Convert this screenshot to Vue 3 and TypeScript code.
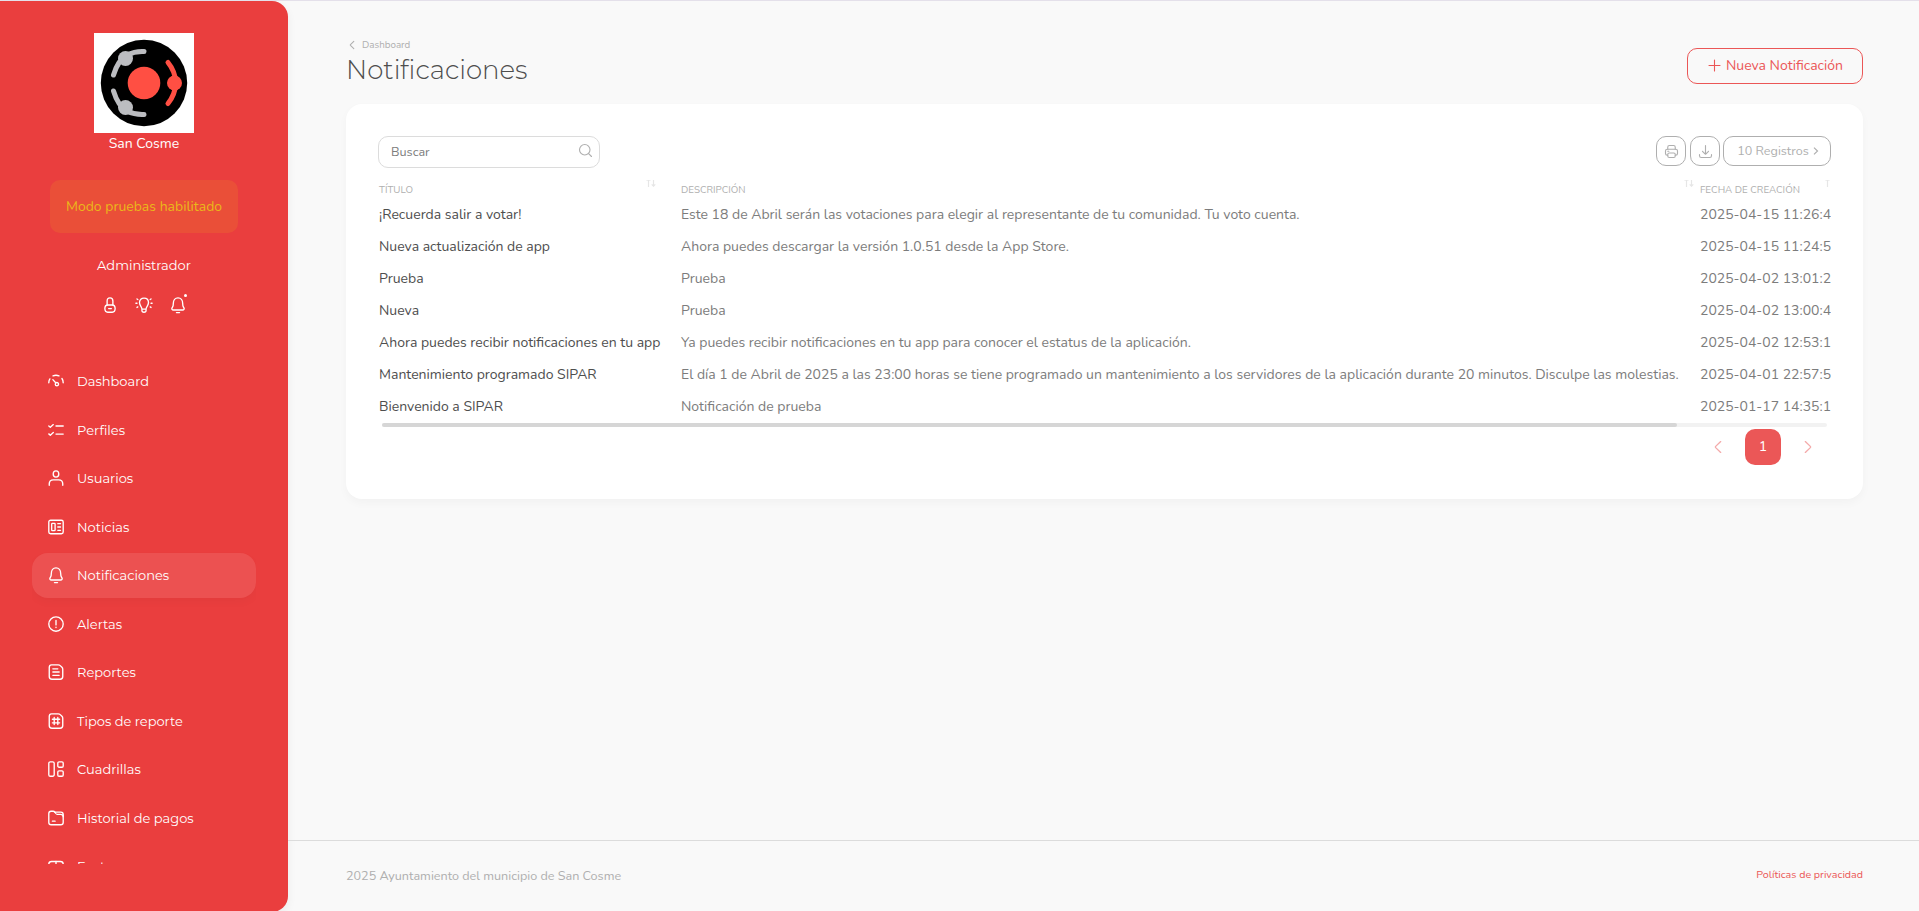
<script setup lang="ts">
interface NavItem {
  label: string
  icon: string[]
  active?: boolean
}

interface Row {
  title: string
  description: string
  date: string
}

const bell = [
  'M4.8 8.2C4.8 4.800 6.900 2 10 2s5.200 2.800 5.200 6.200c0 2.100.3 3.200.9 4.200l.5.800c.7 1.200-.1 2.400-1.400 2.400H4.800c-1.300 0-2.100-1.200-1.400-2.400l.5-.8c.6-1 .9-2.100.9-4.200Z',
  'M8.300 18.400h3.400',
]

const navItems: NavItem[] = [
  {
    label: 'Dashboard',
    icon: [
      'M2 12c0-1.700.400-3.100 1.200-4.300M6.700 4.300a8.300 8.300 0 0 1 6.600 0M16.600 7.200c1 1.300 1.400 2.900 1.400 4.800',
      'M6.500 8.500l3.400 3.800M11 13.500m-1.800 0a1.800 1.800 0 1 0 3.600 0a1.800 1.800 0 1 0-3.600 0',
    ],
  },
  {
    label: 'Perfiles',
    icon: ['M2 5.600l1.700 1.400L7 4M2 14.300l1.700 1.500L7 12.700', 'M10 5.500h8M10 14.500h8'],
  },
  {
    label: 'Usuarios',
    icon: [
      'M10 2c2.200 0 3.100.900 3.100 3.500S12.200 9 10 9s-3.100-.900-3.100-3.500S7.800 2 10 2Z',
      'M2.500 18v-1.500c0-2.800 1.800-4.500 4.500-4.500h6c2.700 0 4.500 1.700 4.500 4.500V18',
    ],
  },
  {
    label: 'Noticias',
    icon: [
      'M4 2.500h12a2 2 0 0 1 2 2v11a2 2 0 0 1-2 2H4a2 2 0 0 1-2-2v-11a2 2 0 0 1 2-2Z',
      'M6 6h2.200a.8.8 0 0 1 .8.8v6.400a.8.8 0 0 1-.8.8H6a.8.8 0 0 1-.8-.8V6.800A.8.8 0 0 1 6 6ZM12 6.300h3M12 10h3M12 13.700h3',
    ],
  },
  { label: 'Notificaciones', icon: bell, active: true },
  {
    label: 'Alertas',
    icon: ['M10 2a8 8 0 1 0 0 16a8 8 0 1 0 0-16Z', 'M10 6v5M10 13.500v.5'],
  },
  {
    label: 'Reportes',
    icon: [
      'M5 2h7.500c1 0 1.500.200 2.200.900l1.900 1.900c.700.700.900 1.200.900 2.200V15c0 2-1 3-3 3H5.500c-2 0-3-1-3-3V5c0-2 .9-3 2.500-3Z',
      'M6.500 6.500h5.500M6.500 10h7M6.500 13.700h7',
    ],
  },
  {
    label: 'Tipos de reporte',
    icon: [
      'M5 2h7.500c1 0 1.500.200 2.200.900l1.900 1.900c.700.700.900 1.200.900 2.200V15c0 2-1 3-3 3H5.500c-2 0-3-1-3-3V5c0-2 .9-3 2.500-3Z',
      'M8 6v8M12 6v8M6 8h8M6 12h8',
    ],
  },
  {
    label: 'Cuadrillas',
    icon: [
      'M3.700 2h2.600A1.700 1.700 0 0 1 8 3.700v12.600A1.700 1.700 0 0 1 6.300 18H3.700A1.700 1.700 0 0 1 2 16.300V3.700A1.700 1.700 0 0 1 3.700 2Z',
      'M13.400 2h3.200A1.400 1.400 0 0 1 18 3.400v3.200A1.400 1.400 0 0 1 16.600 8h-3.200A1.400 1.400 0 0 1 12 6.600V3.400A1.400 1.400 0 0 1 13.400 2ZM13.400 12h3.200a1.400 1.400 0 0 1 1.400 1.400v3.200a1.400 1.400 0 0 1-1.400 1.400h-3.200a1.400 1.400 0 0 1-1.400-1.400v-3.200a1.400 1.400 0 0 1 1.400-1.400Z',
    ],
  },
  {
    label: 'Historial de pagos',
    icon: [
      'M4.500 2.500h2.200c1.200 0 1.700.400 2.300 1.200l.8 1.300c.400.600.800.900 1.500.900h3.700c2 0 3 .8 3 2.500v6.600c0 1.700-1 2.500-2.700 2.500H4.700C3 17.500 2 16.700 2 15V5c0-1.500 1-2.500 2.500-2.500Z',
      'M8.500 3.500h7c1.500 0 2.500.9 2.500 2.500v2.500M6 13.500h3',
    ],
  },
  {
    label: 'Facturas',
    icon: ['M5 5h10a3 3 0 0 1 3 3v7a3 3 0 0 1-3 3H5a3 3 0 0 1-3-3V8a3 3 0 0 1 3-3Z', 'M10 5v3'],
  },
]

const rows: Row[] = [
  {
    title: '¡Recuerda salir a votar!',
    description: 'Este 18 de Abril serán las votaciones para elegir al representante de tu comunidad. Tu voto cuenta.',
    date: '2025-04-15 11:26:4',
  },
  {
    title: 'Nueva actualización de app',
    description: 'Ahora puedes descargar la versión 1.0.51 desde la App Store.',
    date: '2025-04-15 11:24:5',
  },
  { title: 'Prueba', description: 'Prueba', date: '2025-04-02 13:01:2' },
  { title: 'Nueva', description: 'Prueba', date: '2025-04-02 13:00:4' },
  {
    title: 'Ahora puedes recibir notificaciones en tu app',
    description: 'Ya puedes recibir notificaciones en tu app para conocer el estatus de la aplicación.',
    date: '2025-04-02 12:53:1',
  },
  {
    title: 'Mantenimiento programado SIPAR',
    description:
      'El día 1 de Abril de 2025 a las 23:00 horas se tiene programado un mantenimiento a los servidores de la aplicación durante 20 minutos. Disculpe las molestias.',
    date: '2025-04-01 22:57:5',
  },
  { title: 'Bienvenido a SIPAR', description: 'Notificación de prueba', date: '2025-01-17 14:35:1' },
]
</script>

<template>
  <div class="app">
    <aside class="sidebar">
      <svg class="logo" viewBox="0 0 100 100">
        <rect width="100" height="100" fill="#fff" />
        <circle cx="50" cy="50" r="43.200" fill="#000" />
        <circle cx="50" cy="50" r="16.300" fill="#ff4f43" />
        <g fill="none" stroke="#bcbdc1" stroke-width="5" stroke-linecap="round">
          <path d="M19.500 42Q24 27 33 22Q41 18 50 18.500" />
          <path d="M19.500 58Q24 73 33 78Q41 82 50 81.500" />
        </g>
        <circle cx="31.500" cy="25.500" r="7.500" fill="#bcbdc1" />
        <circle cx="31.500" cy="74.500" r="7.500" fill="#bcbdc1" />
        <path d="M74 29.500Q81 38 82 50Q81 62 74 70.500" fill="none" stroke="#ff4f43" stroke-width="5" stroke-linecap="round" />
        <circle cx="80.500" cy="50" r="7.500" fill="#ff4f43" />
      </svg>
      <div class="org">San Cosme</div>
      <div class="mode">Modo pruebas habilitado</div>
      <div class="user">Administrador</div>
      <div class="tools">
        <svg class="icon" viewBox="0 0 20 20">
          <path d="M6.800 10V5.500C6.800 3.200 7.900 2 10 2s3.200 1.200 3.200 3.500V10" />
          <path d="M7.500 10h5c2.200 0 3.200 1.200 3.200 4S14.700 18 12.500 18h-5c-2.200 0-3.200-1.200-3.200-4S5.300 10 7.500 10ZM8.500 14h3" />
        </svg>
        <svg class="icon" viewBox="0 0 20 20">
          <path d="M7.700 14.500C7.700 12 5 10.700 5 7.300C5 4.200 7.200 2.300 10 2.300s5 1.900 5 5c0 3.400-2.700 4.700-2.700 7.200v1.700c0 1.200-.8 1.800-2.300 1.800s-2.300-.6-2.300-1.800ZM7.700 14.500h4.600" />
          <path d="M1 8h1.200M17.800 8H19M2.200 3.300l.9.600M17.800 3.300l-.9.600M2.200 12.700l.9-.6M17.800 12.700l-.9-.6" />
        </svg>
        <span class="bell">
          <svg class="icon" viewBox="0 0 20 20"><path v-for="d in bell" :key="d" :d="d" /></svg>
          <i class="dot"></i>
        </span>
      </div>
      <nav class="nav">
        <a v-for="item in navItems" :key="item.label" class="nav-item" :class="{ active: item.active }">
          <svg class="icon" viewBox="0 0 20 20"><path v-for="d in item.icon" :key="d" :d="d" /></svg>
          <span>{{ item.label }}</span>
        </a>
      </nav>
    </aside>

    <div class="page">
      <main class="content">
        <header class="head">
          <div>
            <div class="crumb">
              <svg class="icon crumb-icon" viewBox="0 0 20 20"><path d="M13 16L7.400 10.700a1 1 0 0 1 0-1.400L13 4" /></svg>
              <span>Dashboard</span>
            </div>
            <h1>Notificaciones</h1>
          </div>
          <button class="new-btn">
            <svg class="icon plus" viewBox="0 0 15 15"><path d="M7.500 13V2M2 7.500h11" /></svg>
            <span>Nueva Notificación</span>
          </button>
        </header>

        <section class="card">
          <div class="toolbar">
            <div class="search">
              <span>Buscar</span>
              <svg class="icon search-icon" viewBox="0 0 20 20">
                <path d="M9 2a7 7 0 1 0 0 14a7 7 0 1 0 0-14ZM14.200 14.200L18 18" />
              </svg>
            </div>
            <div class="actions">
              <button class="tool-btn">
                <svg class="icon tool-icon" viewBox="0 0 20 20">
                  <path d="M5 7V4.200C5 2.800 5.800 2 7.200 2h5.600C14.200 2 15 2.800 15 4.200V7" />
                  <path d="M5 15H4.300C2.800 15 2 14.200 2 12.700V9.300C2 7.800 2.800 7 4.300 7h11.400C17.200 7 18 7.800 18 9.300v3.400c0 1.500-.8 2.300-2.300 2.300H15" />
                  <path d="M7 12h6c1.300 0 2 .7 2 2v2c0 1.300-.7 2-2 2H7c-1.300 0-2-.7-2-2v-2c0-1.300.7-2 2-2ZM5 9.600h1.500" />
                </svg>
              </button>
              <button class="tool-btn">
                <svg class="icon tool-icon" viewBox="0 0 20 20">
                  <path d="M2 14v1.500C2 17.200 2.800 18 4.500 18h11c1.700 0 2.500-.8 2.500-2.500V14M10 2v11.500M14 9.700l-3.300 3.400a1 1 0 0 1-1.400 0L6 9.700" />
                </svg>
              </button>
              <button class="length-btn">
                <span>10 Registros</span>
                <svg class="length-icon" viewBox="0 0 6 8"><path d="M1 .6L4.500 4L1 7.400" /></svg>
              </button>
            </div>
          </div>

          <div class="table">
            <div class="row header">
              <div class="cell">
                TÍTULO
                <svg class="sort" viewBox="0 0 10 9"><path d="M2.500 9V.8M.7 2.600L2.500.8l1.800 1.800M7.500 0v8.200M5.700 6.400l1.800 1.800l1.800-1.800" /></svg>
              </div>
              <div class="cell">
                DESCRIPCIÓN
                <svg class="sort" viewBox="0 0 10 9"><path d="M2.500 9V.8M.7 2.600L2.500.8l1.800 1.800M7.500 0v8.200M5.700 6.400l1.800 1.800l1.800-1.800" /></svg>
              </div>
              <div class="cell">
                FECHA DE CREACIÓN
                <svg class="sort single" viewBox="0 0 5 9"><path d="M2.500 9V.8M.7 2.600L2.500.8l1.800 1.800" /></svg>
              </div>
            </div>
            <div v-for="row in rows" :key="row.date" class="row">
              <div class="cell title">{{ row.title }}</div>
              <div class="cell">{{ row.description }}</div>
              <div class="cell">{{ row.date }}</div>
            </div>
          </div>
          <div class="track"><div class="thumb"></div></div>

          <div class="pager">
            <span class="page-link faded">
              <svg class="icon page-icon" viewBox="0 0 20 20"><path d="M13 16L7.400 10.700a1 1 0 0 1 0-1.400L13 4" /></svg>
            </span>
            <span class="page-link current">1</span>
            <span class="page-link faded">
              <svg class="icon page-icon" viewBox="0 0 20 20"><path d="M7 4l5.600 5.300a1 1 0 0 1 0 1.400L7 16" /></svg>
            </span>
          </div>
        </section>
      </main>

      <footer class="footer">
        <span>2025 Ayuntamiento del municipio de San Cosme</span>
        <a class="privacy">Políticas de privacidad</a>
      </footer>
    </div>
  </div>
</template>

<style>
body {
  margin: 0;
  background: #f9f9f9;
}
</style>

<style scoped>
* {
  box-sizing: border-box;
}

.app {
  display: flex;
  height: 911px;
  overflow: hidden;
  border-top: 1px solid #e4e0ea;
  background: #f9f9f9;
  color: #7c7c7c;
  font: 14px/20px Nunito, "Noto Sans", sans-serif;
}

button {
  padding: 0;
  background: none;
  font: inherit;
  color: inherit;
}

.icon {
  display: block;
  flex: none;
  width: 18px;
  height: 18px;
  fill: none;
  stroke: currentColor;
  stroke-width: 1.5;
  stroke-linecap: round;
  stroke-linejoin: round;
}

/* Sidebar */
.sidebar {
  display: flex;
  flex-direction: column;
  align-items: center;
  flex: none;
  width: 288px;
  height: 911px;
  padding: 32px;
  border-radius: 0 16px 16px 0;
  background: #ea3e3e;
  color: #fff;
  box-shadow: 0 4px 10px rgba(0, 0, 0, 0.06);
  font-family: Montserrat, "Noto Sans", sans-serif;
  font-size: 13px;
}

.logo {
  display: block;
  flex: none;
  width: 100px;
  height: 100px;
}

.org {
  margin-top: 1px;
  font: 14px/20px Nunito, "Noto Sans", sans-serif;
}

.mode {
  height: 53px;
  margin-top: 26px;
  padding: 0 16px;
  border-radius: 10px;
  background: rgba(235, 183, 26, 0.15);
  color: #ebb71a;
  font: 14px/53px Nunito, "Noto Sans", sans-serif;
}

.user {
  margin-top: 22px;
}

.tools {
  display: flex;
  gap: 16px;
  margin-top: 21px;
}

.bell {
  position: relative;
}

.dot {
  position: absolute;
  top: -2px;
  right: 0;
  width: 3px;
  height: 3px;
  border-radius: 50%;
  background: #fff;
}

.nav {
  display: flex;
  flex-direction: column;
  gap: 4px;
  align-self: stretch;
  height: 505px;
  margin-top: 45px;
  overflow: hidden;
}

.nav-item {
  display: flex;
  flex: none;
  align-items: center;
  gap: 12px;
  height: 44.5px;
  padding: 0 15px;
  border-radius: 16px;
}

.nav-item.active {
  background: rgba(255, 255, 255, 0.1);
  box-shadow: 0 4px 10px rgba(0, 0, 0, 0.03);
}

/* Page */
.page {
  display: flex;
  flex: 1;
  flex-direction: column;
  height: 910px;
}

.content {
  flex: 1;
  padding: 35px 57px 0 58px;
}

.head {
  display: flex;
  justify-content: space-between;
  height: 68px;
}

.crumb {
  display: flex;
  align-items: center;
  gap: 4px;
  height: 18px;
  color: #afafaf;
  font-size: 9.8px;
}

.crumb-icon {
  width: 12px;
  height: 12px;
  stroke-width: 1.8;
}

h1 {
  margin: 1px 0 0;
  color: #4e4e4e;
  font: 300 26px/30px Montserrat, "Noto Sans", sans-serif;
}

.new-btn {
  display: flex;
  align-items: center;
  justify-content: center;
  gap: 4px;
  width: 176px;
  height: 36px;
  margin-top: 12px;
  border: 1px solid #eb5757;
  border-radius: 10px;
  color: #eb5757;
}

.plus {
  width: 15px;
  height: 15px;
  margin-bottom: 1px;
  stroke-width: 1.1;
}

.card {
  height: 395px;
  padding: 32px;
  border-radius: 16px;
  background: #fff;
  box-shadow: 0 4px 10px rgba(0, 0, 0, 0.03);
}

.toolbar {
  display: flex;
  justify-content: space-between;
  height: 44px;
}

.search {
  display: flex;
  align-items: center;
  justify-content: space-between;
  width: 222px;
  height: 32px;
  padding: 0 6px 0 12px;
  border: 1px solid #dcdcdc;
  border-radius: 10px;
  font-size: 12.6px;
}

.search-icon {
  width: 15px;
  height: 15px;
  margin-bottom: 3px;
  color: #afafaf;
}

.actions {
  display: flex;
  gap: 4px;
  color: #afafaf;
}

.tool-btn,
.length-btn {
  display: flex;
  align-items: center;
  justify-content: center;
  width: 30px;
  height: 30px;
  border: 1px solid #afafaf;
  border-radius: 10px;
}

.tool-icon {
  width: 15px;
  height: 15px;
}

.length-btn {
  gap: 4px;
  width: 108px;
  margin-left: -1px;
  padding-left: 2px;
  font-size: 12.6px;
}

.length-icon {
  width: 6px;
  height: 8px;
  fill: none;
  stroke: currentColor;
  stroke-width: 1.2;
}

.table {
  overflow: hidden;
}

.row {
  display: grid;
  grid-template-columns: 302px 1019px 131px;
  height: 32px;
  padding-left: 1px;
  line-height: 32px;
  white-space: nowrap;
}

.row.header {
  height: 18px;
  margin: -2px 0 3px;
  color: #afafaf;
  font-size: 9.8px;
  line-height: 24px;
}

.cell {
  position: relative;
}

.title {
  color: #4e4e4e;
}

.sort {
  position: absolute;
  top: 0;
  right: 25px;
  width: 10px;
  height: 9px;
  fill: none;
  stroke: #e6e6e6;
  stroke-width: 1.2;
}

.cell:nth-child(2) .sort {
  right: 6px;
}

.sort.single {
  right: 1px;
  width: 5px;
}

.track {
  height: 4px;
  margin: 0 4px;
  border-radius: 2px;
  background: #f2f2f2;
}

.thumb {
  width: 1295px;
  height: 4px;
  border-radius: 2px;
  background: #d6d6d6;
}

.pager {
  display: flex;
  justify-content: flex-end;
  gap: 9px;
  margin-top: 2px;
  padding-right: 5px;
}

.page-link {
  display: flex;
  align-items: center;
  justify-content: center;
  width: 36px;
  height: 36px;
  border-radius: 10px;
  color: #eb5757;
}

.faded {
  opacity: 0.5;
}

.current {
  background: #eb5757;
  color: #fff;
}

.page-icon {
  width: 18px;
  height: 18px;
}

.footer {
  display: flex;
  justify-content: space-between;
  height: 71px;
  padding: 0 57px 0 58px;
  border-top: 1px solid #dcdcdc;
  color: #afafaf;
  font-size: 12.6px;
  line-height: 70px;
}

.privacy {
  color: #eb5757;
  font-size: 10.7px;
  line-height: 68px;
}
</style>
